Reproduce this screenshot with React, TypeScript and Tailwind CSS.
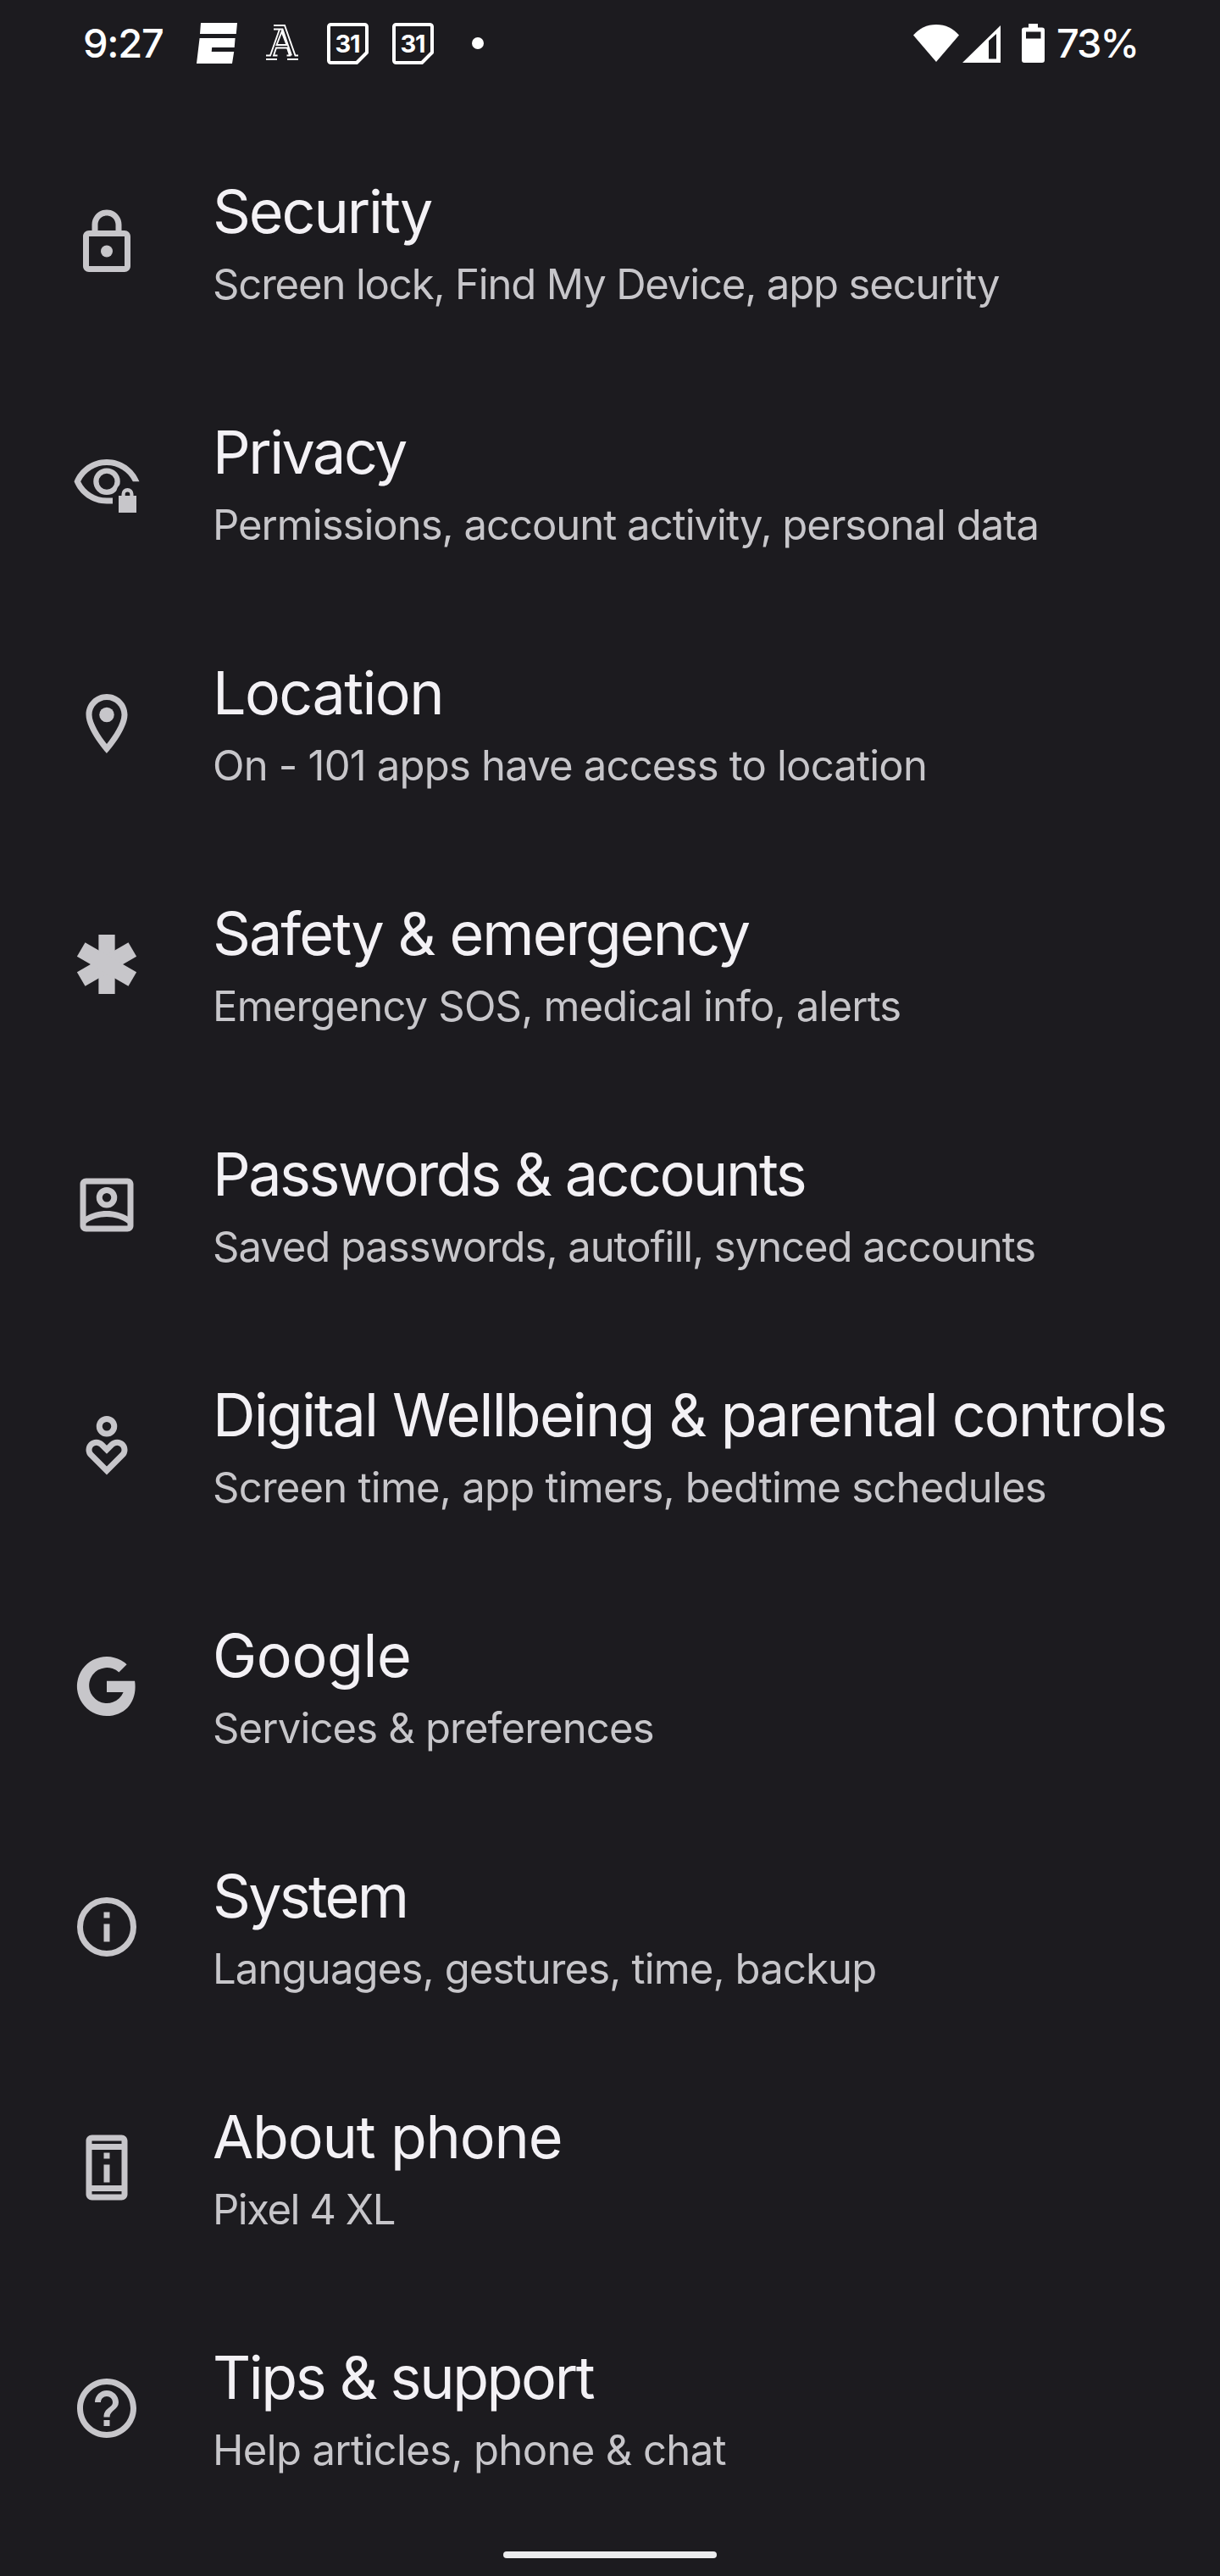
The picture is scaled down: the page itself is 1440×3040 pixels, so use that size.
import type { ReactNode } from 'react'

interface SettingsItem {
  title: string
  summary: string
  titleClass: string
  summaryClass: string
  icon: ReactNode
}

const items: SettingsItem[] = [
  {
    title: 'Security',
    summary: 'Screen lock, Find My Device, app security',
    titleClass: 'tracking-[-2.1px]',
    summaryClass: 'tracking-[-1.15px]',
    icon: (
      <>
        <path d="M18 8h-1V6c0-2.76-2.24-5-5-5S7 3.24 7 6v2H6c-1.1 0-2 .9-2 2v10c0 1.1.9 2 2 2h12c1.1 0 2-.9 2-2V10c0-1.1-.9-2-2-2zM9 6c0-1.66 1.34-3 3-3s3 1.34 3 3v2H9V6zm9 14H6V10h12v10z" />
        <circle cx="12" cy="15" r="2" />
      </>
    ),
  },
  {
    title: 'Privacy',
    summary: 'Permissions, account activity, personal data',
    titleClass: 'tracking-[-2.5px]',
    summaryClass: 'tracking-[-0.99px]',
    icon: (
      <>
        <path d="M12 4C7 4 2.73 7.11 1 11.5 2.73 15.89 7 19 12 19h2v-2h-2c-3.8 0-7.17-2.13-8.82-5.5C4.83 8.13 8.2 6 12 6s7.17 2.13 8.82 5.5H23C21.27 7.11 17 4 12 4z" />
        <circle cx="12" cy="11.5" r="3.6" fill="none" stroke="currentColor" strokeWidth="1.8" />
        <circle cx="19" cy="15.4" r="3.8" fill="#1c1b1f" />
        <path d="M16 16.3h1v-.6a2 2 0 0 1 4 0v.6h1V22h-6v-5.7zm2.2 0h1.6v-.5a.8.8 0 0 0-1.6 0v.5z" />
      </>
    ),
  },
  {
    title: 'Location',
    summary: 'On - 101 apps have access to location',
    titleClass: 'tracking-[-1.6px]',
    summaryClass: 'tracking-[-0.8px]',
    icon: (
      <>
        <path d="M12 2C8.13 2 5 5.13 5 9c0 5.25 7 13 7 13s7-7.75 7-13c0-3.87-3.13-7-7-7zM7 9c0-2.76 2.24-5 5-5s5 2.24 5 5c0 2.88-2.88 7.19-5 9.88C9.92 16.21 7 11.85 7 9z" />
        <circle cx="12" cy="9" r="2.5" />
      </>
    ),
  },
  {
    title: 'Safety & emergency',
    summary: 'Emergency SOS, medical info, alerts',
    titleClass: 'tracking-[-1.94px]',
    summaryClass: 'tracking-[-0.82px]',
    icon: (
      <>
        <rect x="9.25" y="2" width="5.5" height="20" />
        <rect x="9.25" y="2" width="5.5" height="20" transform="rotate(60 12 12)" />
        <rect x="9.25" y="2" width="5.5" height="20" transform="rotate(120 12 12)" />
      </>
    ),
  },
  {
    title: 'Passwords & accounts',
    summary: 'Saved passwords, autofill, synced accounts',
    titleClass: 'tracking-[-2.47px]',
    summaryClass: 'tracking-[-1.04px]',
    icon: (
      <>
        <path d="M19 3H5c-1.1 0-2 .9-2 2v14c0 1.1.9 2 2 2h14c1.1 0 2-.9 2-2V5c0-1.1-.9-2-2-2zM5 19v-.77C6.74 16.84 9.32 16 12 16s5.26.84 7 2.23V19H5zm14-3.14C17.07 14.7 14.62 14 12 14s-5.07.7-7 1.86V5h14v10.86z" />
        <circle cx="12" cy="9.5" r="2.5" fill="none" stroke="currentColor" strokeWidth="2" />
      </>
    ),
  },
  {
    title: 'Digital Wellbeing & parental controls',
    summary: 'Screen time, app timers, bedtime schedules',
    titleClass: 'tracking-[-1.82px]',
    summaryClass: 'tracking-[-0.77px]',
    icon: (
      <g fill="none" stroke="currentColor" strokeWidth="2">
        <circle cx="12" cy="5.5" r="2.5" />
        <path d="M12 20.44 6.73 15.17a2.5 2.5 0 0 1 3.54-3.54L12 13.36l1.73-1.73a2.5 2.5 0 0 1 3.54 3.54z" />
      </g>
    ),
  },
  {
    title: 'Google',
    summary: 'Services & preferences',
    titleClass: 'tracking-[-0.4px]',
    summaryClass: 'tracking-[-0.84px]',
    icon: (
      <path d="M18.75 4.65A10 10 0 1 0 12 22c5.8 0 9.6-4.1 9.6-9.8 0-.7-.05-1.4-.15-2H12V14h5.6A6 6 0 1 1 16.1 7.3z" />
    ),
  },
  {
    title: 'System',
    summary: 'Languages, gestures, time, backup',
    titleClass: 'tracking-[-2.7px]',
    summaryClass: 'tracking-[-0.86px]',
    icon: (
      <>
        <circle cx="12" cy="12" r="9" fill="none" stroke="currentColor" strokeWidth="2" />
        <path d="M11 7h2v2h-2zM11 11h2v6h-2z" />
      </>
    ),
  },
  {
    title: 'About phone',
    summary: 'Pixel 4 XL',
    titleClass: 'tracking-[-1.2px]',
    summaryClass: 'tracking-[-1.45px]',
    icon: (
      <path
        fillRule="evenodd"
        d="M7 1h10c1.1 0 2 .9 2 2v18c0 1.1-.9 2-2 2H7c-1.1 0-2-.9-2-2V3c0-1.1.9-2 2-2zM7 3v1h10V3H7zM7 6v12h10V6H7zM7 20v1h10v-1H7zM11 7h2v2h-2V7zM11 11h2v6h-2v-6z"
      />
    ),
  },
  {
    title: 'Tips & support',
    summary: 'Help articles, phone & chat',
    titleClass: 'tracking-[-2.4px]',
    summaryClass: 'tracking-[-0.63px]',
    icon: (
      <path d="M11 18h2v-2h-2v2zm1-16C6.48 2 2 6.48 2 12s4.48 10 10 10 10-4.48 10-10S17.52 2 12 2zm0 18c-4.41 0-8-3.59-8-8s3.59-8 8-8 8 3.59 8 8-3.59 8-8 8zm0-14c-2.21 0-4 1.79-4 4h2c0-1.1.9-2 2-2s2 .9 2 2c0 2-3 1.75-3 5h2c0-2.25 3-2.5 3-5 0-2.21-1.79-4-4-4z" />
    ),
  },
]

function CalendarIcon() {
  return (
    <svg width="49" height="49" viewBox="0 0 49 49" fill="none">
      <path
        d="M4.5 2h40A2.5 2.5 0 0 1 47 4.5V35L35 47H4.5A2.5 2.5 0 0 1 2 44.5v-40A2.5 2.5 0 0 1 4.5 2z"
        stroke="white"
        strokeWidth="4"
        strokeLinejoin="round"
      />
      <text x="24" y="34.5" textAnchor="middle" fontSize="29" fontWeight="700" fill="white" letterSpacing="-1">
        31
      </text>
    </svg>
  )
}

function StatusBar() {
  return (
    <header className="flex h-36 items-start justify-between px-[98px] pt-[22px] text-white">
      <div className="flex h-[58px] items-center">
        <span className="w-[134px] whitespace-nowrap text-[47px] font-medium leading-[58px] tracking-[-1.3px]">9:27</span>
        <svg width="48" height="48" viewBox="0 0 48 48" fill="white">
          <path d="M5 0h43l-1.2 13H4zM3.6 18h42l-.9 11H18.2l-.5 5h26.500L42 48H0z" />
        </svg>
        <svg className="ml-[34px]" width="38" height="44" viewBox="0 0 38 44" fill="none" stroke="white" strokeWidth="1.9">
          <path d="M9 1h13l12.500 35.500H38M9 5.500h7L5 36.500H0M0 41h13M25 41h13M13.500 36.500H9l3-9h13l3 9h-3.500M18.500 8.500 12.500 24h12zM16 5.500h3.500l10.500 31" />
        </svg>
        <div className="ml-[34px] flex gap-7">
          <CalendarIcon />
          <CalendarIcon />
        </div>
        <span className="ml-[45px] size-3.5 rounded-full bg-white" />
      </div>
      <div className="flex h-[58px] items-center">
        <svg width="54" height="44" viewBox="0 0 54 44" fill="white">
          <path d="M0 12.5C7 4.500 16 0 27 0s20 4.500 27 12.500L27 44z" />
        </svg>
        <svg className="ml-1 mt-0.5" width="45" height="44" viewBox="0 0 45 44" fill="white">
          <path fillRule="evenodd" d="M0 44 45 0v44zM31 18v21.500h9V10z" />
        </svg>
        <svg className="ml-[25px]" width="27" height="46" viewBox="0 0 27 46" fill="white">
          <path fillRule="evenodd" d="M8 0h11v4.500h5a3 3 0 0 1 3 3V43a3 3 0 0 1-3 3H3a3 3 0 0 1-3-3V7.500a3 3 0 0 1 3-3h5zM5 9.500v8h17.500v-8z" />
        </svg>
        <span className="ml-[14px] w-[95px] whitespace-nowrap text-[47px] font-medium leading-[58px] tracking-[-2px]">73%</span>
      </div>
    </header>
  )
}

function SettingsRow({ item }: { item: SettingsItem }) {
  return (
    <li className="flex h-[284px] items-center pl-[84px]">
      <svg className="size-[84px] shrink-0 text-[#c7c6ca]" viewBox="0 0 24 24" fill="currentColor">
        {item.icon}
      </svg>
      <div className="ml-[83px] whitespace-nowrap pt-[3px]">
        <h2 className="text-[70px] leading-[96px] text-[#f3f1f5]">
          <span className={item.titleClass}>{item.title}</span>
        </h2>
        <p className="text-[49px] leading-[76px] text-[#c7c6ca]">
          <span className={item.summaryClass}>{item.summary}</span>
        </p>
      </div>
    </li>
  )
}

export default function App() {
  return (
    <div className="flex h-[3040px] w-[1440px] flex-col overflow-hidden bg-[#1c1b1f] font-['Inter',sans-serif]">
      <StatusBar />
      <ul>
        {items.map((item) => (
          <SettingsRow key={item.title} item={item} />
        ))}
      </ul>
      <div className="mx-auto mt-[27px] h-2 w-[252px] rounded-full bg-[#ececee]" />
    </div>
  )
}
